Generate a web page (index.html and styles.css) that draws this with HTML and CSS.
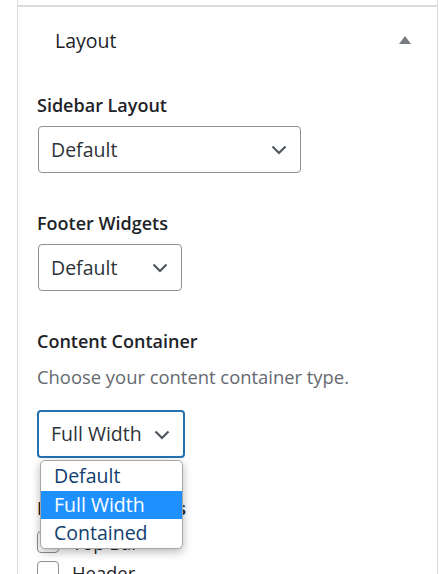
FILE: index.html
```html
<!DOCTYPE html>
<html>
<head>
<meta charset="utf-8">
<link rel="stylesheet" href="styles.css">
</head>
<body>
<div class="panel">
  <div class="section">
    <div class="section-head">
      <span class="section-title">Layout</span>
      <svg class="toggle" width="12" height="8" viewBox="0 0 12 8"><path d="M0 8 L6 0 L12 8 Z" fill="#787c82"/></svg>
    </div>
    <div class="section-body">
      <div class="field">
        <div class="label">Sidebar Layout</div>
        <div class="select w-sidebar">
          <span>Default</span>
          <svg class="chev" width="16" height="10" viewBox="0 0 16 10"><path d="M1.5 1.5 L8 8 L14.5 1.5" fill="none" stroke="#50575e" stroke-width="2.2"/></svg>
        </div>
      </div>
      <div class="field">
        <div class="label">Footer Widgets</div>
        <div class="select w-footer">
          <span>Default</span>
          <svg class="chev" width="16" height="10" viewBox="0 0 16 10"><path d="M1.5 1.5 L8 8 L14.5 1.5" fill="none" stroke="#50575e" stroke-width="2.2"/></svg>
        </div>
      </div>
      <div class="field">
        <div class="label">Content Container</div>
        <div class="desc">Choose your content container type.</div>
        <div class="select-wrap">
          <div class="select focused w-container">
            <span>Full Width</span>
            <svg class="chev" width="16" height="10" viewBox="0 0 16 10"><path d="M1.5 1.5 L8 8 L14.5 1.5" fill="none" stroke="#50575e" stroke-width="2.2"/></svg>
          </div>
          <div class="dropdown">
            <div class="opt">Default</div>
            <div class="opt active">Full Width</div>
            <div class="opt">Contained</div>
          </div>
        </div>
      </div>
      <div class="field">
        <div class="label label-tight">Disable Elements</div>
        <label class="check"><span class="box"></span><span>Top Bar</span></label>
        <label class="check"><span class="box"></span><span>Header</span></label>
      </div>
    </div>
  </div>
</div>
</body>
</html>
```
FILE: styles.css
```css
html, body {
  margin: 0;
  padding: 0;
  background: #fff;
  height: 574px;
  overflow: hidden;
}
body {
  font-family: "Open Sans", "Noto Sans", sans-serif;
  color: #1d2327;
}
.panel {
  margin-left: 17px;
  width: 419px;
  height: 574px;
  border-left: 1px solid #dcdcde;
  border-right: 1px solid #dcdcde;
  padding-top: 5px;
}
.section {
  border-top: 2px solid #dcdcde;
}
.section-head {
  display: flex;
  align-items: center;
  justify-content: space-between;
  height: 68px;
  padding: 0 26px 0 37px;
}
.section-title {
  font-size: 19.5px;
  font-weight: 500;
  margin-top: -2px;
}
.toggle {
  margin-top: -3px;
}
.section-body {
  padding: 17px 19px 0 19px;
}
.field {
  margin-bottom: 37px;
}
.label {
  font-size: 18px;
  font-weight: 600;
  line-height: 26px;
  margin-bottom: 8px;
}
.label-tight {
  margin-bottom: 6px;
}
.desc {
  font-size: 18.4px;
  color: #646970;
  line-height: 26px;
  margin-top: 10px;
  margin-bottom: 20px;
}
.select {
  box-sizing: border-box;
  height: 47px;
  border: 1px solid #8c8f94;
  border-radius: 4px;
  display: flex;
  align-items: center;
  justify-content: space-between;
  padding: 0 13px 0 12px;
  font-size: 19.5px;
  color: #2c3338;
  margin-left: 1px;
}
.select span {
  margin-top: -1px;
}
.chev {
  margin-top: 1px;
}
.w-sidebar { width: 263px; }
.w-footer { width: 144px; }
.w-container { width: 148px; margin-left: 0; }
.focused {
  border: 2px solid #2271b1;
  height: 48px;
  padding-left: 12px;
}
.select-wrap {
  position: relative;
}
.dropdown {
  position: absolute;
  left: 3px;
  top: 50px;
  width: 143px;
  box-sizing: border-box;
  background: #fff;
  border: 1px solid #a7a7a7;
  border-radius: 5px;
  box-shadow: 0 3px 10px rgba(0,0,0,0.28);
  padding: 1px 0 0 0;
  z-index: 5;
}
.opt {
  font-size: 19.5px;
  line-height: 28.5px;
  padding-left: 13px;
  color: #10406e;
}
.opt.active {
  background: #1e90ff;
  color: #fff;
}
.check {
  display: flex;
  align-items: center;
  gap: 13px;
  font-size: 18.4px;
  height: 30px;
}
.box {
  width: 20px;
  height: 20px;
  border: 1px solid #8c8f94;
  border-radius: 4px;
  box-sizing: content-box;
}
```
